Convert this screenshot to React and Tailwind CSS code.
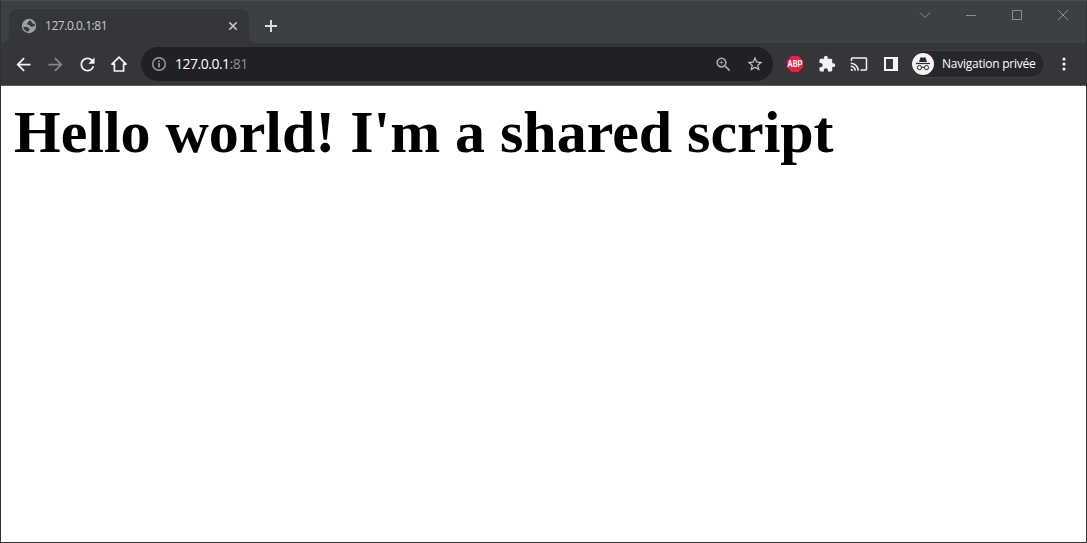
import React from "react";
import { MdArrowBack, MdArrowForward, MdRefresh, MdZoomIn, MdStarBorder, MdExtension, MdCast } from "react-icons/md";

function Slot({ children, className = "" }) {
  return <div className={"flex h-8 w-8 shrink-0 items-center justify-center " + className}>{children}</div>;
}

function GlobeIcon() {
  return (
    <svg width="16" height="16" viewBox="0 0 16 16">
      <circle cx="8" cy="8" r="7.200" fill="#9aa0a6" />
      <path d="M9.500 2.300C7.300 2.500 7.700 4.200 6.500 4.900 5.700 5.400 6 6.600 7.300 6.700c1.800 0 1.300 1.700 2.800 1.900 1.500.2 2.300-.6 3.700-.3.100-1-.1-1.800-.4-2.500-1.300.3-1.800-.1-2.200-1-.3-.8-1.300-.9-1.700-2.500z" fill="#35363a" />
      <path d="M2.300 8.400c1.300.6 2.900.3 4.400.8 1 .4.900 1.500 2 1.700.5.500-.1 1.100-.8 1.300-.5.200-.4.900-.6 1.600-2.700-.4-4.800-2.600-5-5.400z" fill="#35363a" />
    </svg>
  );
}

function HomeIcon() {
  return (
    <svg width="18" height="18" viewBox="0 0 18 18" fill="none" stroke="#f1f3f4" strokeWidth="1.700">
      <path d="M1.500 9.600 9 2.100l7.500 7.500M1.400 9.200H4.400V16h9.200V9.200h3" />
    </svg>
  );
}

function InfoIcon() {
  return (
    <svg width="16" height="16" viewBox="0 0 16 16" fill="none" stroke="#9aa0a6">
      <circle cx="8" cy="8" r="6.300" strokeWidth="1.400" />
      <path d="M8 7v4.500M8 4.500V6" strokeWidth="1.700" />
    </svg>
  );
}

function AbpIcon() {
  return (
    <svg width="18" height="18" viewBox="0 0 18 18">
      <path d="M5.700 1h6.600L17 5.700v6.600L12.300 17H5.700L1 12.300V5.700z" fill="#f21d46" />
      <text x="9" y="12" textAnchor="middle" textLength="15" lengthAdjust="spacingAndGlyphs" fontFamily="Roboto, sans-serif" fontSize="8.500" fontWeight="700" fill="#fff">ABP</text>
    </svg>
  );
}

function IncognitoIcon() {
  return (
    <svg width="22" height="22" viewBox="0 0 22 22">
      <circle cx="11" cy="11" r="11" fill="#f1f3f4" />
      <path d="M7 9 8.400 4.700q.2-.6.800-.4l1.800.5 1.800-.5q.6-.2.800.4L15 9z" fill="#292a2d" />
      <path d="M4 10.500h14" stroke="#292a2d" strokeWidth="1.200" />
      <g fill="none" stroke="#292a2d" strokeWidth="1">
        <circle cx="7.500" cy="14.600" r="2.100" />
        <circle cx="14.500" cy="14.600" r="2.100" />
        <path d="M9.600 14.500q1.400-.7 2.800 0" />
      </g>
    </svg>
  );
}

function TabStrip() {
  return (
    <div className="flex h-[42px] shrink-0 items-stretch justify-between bg-[#3c4043] pl-2">
      <div className="flex">
        <div className="relative mt-2 flex h-[34px] w-60 items-center rounded-t-lg bg-[#35363a] pl-3 pr-[10px]">
          <svg className="absolute -left-2 bottom-0" width="8" height="8" viewBox="0 0 8 8"><path d="M8 0v8H0a8 8 0 0 0 8-8" fill="#35363a" /></svg>
          <svg className="absolute -right-2 bottom-0" width="8" height="8" viewBox="0 0 8 8"><path d="M0 0v8h8a8 8 0 0 1-8-8" fill="#35363a" /></svg>
          <GlobeIcon />
          <span className="ml-2 flex-1 text-[12px] leading-4 tracking-[-0.45px] text-[#c6c9cd]">127.0.0.1:81</span>
          <svg width="12" height="12" viewBox="0 0 12 12" stroke="#c8cacd" strokeWidth="1.600"><path d="m2.300 2.300 7.400 7.400M9.700 2.300 2.300 9.700" /></svg>
        </div>
        <svg className="ml-[14px] mt-[17px]" width="16" height="16" viewBox="0 0 16 16" stroke="#dadce0" strokeWidth="2"><path d="M8 2v12M2 8h12" /></svg>
      </div>
      <div className="flex h-7 items-center">
        <svg width="46" height="28" viewBox="0 0 46 28" fill="none" stroke="#8c8f92"><path d="m18 11.500 5 5 5-5" /></svg>
        <svg width="46" height="28" viewBox="0 0 46 28" stroke="#8c8f92"><path d="M18 14.500h10" /></svg>
        <svg width="46" height="28" viewBox="0 0 46 28" fill="none" stroke="#8c8f92"><path d="M18.500 9.500h9v9h-9z" /></svg>
        <svg width="46" height="28" viewBox="0 0 46 28" stroke="#8c8f92"><path d="m18 9 10 10M28 9 18 19" /></svg>
      </div>
    </div>
  );
}

function Toolbar() {
  return (
    <div className="flex h-[43px] shrink-0 items-center border-b border-[#5f6064] bg-[#35363a] px-[6px]">
      <Slot><MdArrowBack size={21} color="#f1f3f4" /></Slot>
      <Slot><MdArrowForward size={21} color="#85868a" /></Slot>
      <Slot><MdRefresh size={21} color="#f1f3f4" /></Slot>
      <Slot><HomeIcon /></Slot>
      <div className="ml-1.5 flex h-[34px] w-[633px] items-center rounded-full bg-[#202124] pl-[10px]">
        <InfoIcon />
        <span className="ml-2 flex-1 text-[14px] leading-5 tracking-[-0.5px] text-white">127.0.0.1<span className="text-[#8b8f94]">:81</span></span>
        <Slot><MdZoomIn size={19} color="#a8acb0" /></Slot>
        <Slot className="mr-0.5"><MdStarBorder size={18} color="#c4c7ca" /></Slot>
      </div>
      <Slot className="ml-1.5"><AbpIcon /></Slot>
      <Slot><MdExtension size={18} color="#f1f3f4" /></Slot>
      <Slot><MdCast size={18} color="#f1f3f4" /></Slot>
      <Slot><div className="h-[14px] w-[14px] border-2 border-r-[5px] border-[#f1f3f4]" /></Slot>
      <div className="ml-[3px] flex h-[28px] w-[135px] shrink-0 items-center rounded-full border border-[#3f4044] bg-[#27262b] pl-px">
        <IncognitoIcon />
        <span className="ml-2 whitespace-nowrap text-[12px] leading-4 tracking-[-0.24px] text-white">Navigation privée</span>
      </div>
      <Slot className="ml-[3px]">
        <svg width="4" height="16" viewBox="0 0 4 16" fill="#f1f3f4"><circle cx="2" cy="3" r="1.600" /><circle cx="2" cy="8" r="1.600" /><circle cx="2" cy="13" r="1.600" /></svg>
      </Slot>
    </div>
  );
}

export default function App() {
  return (
    <div className="flex h-[543px] w-[1087px] flex-col overflow-hidden border border-[#303134] border-t-[#494c50] bg-white font-['Open_Sans','Noto_Sans',sans-serif]">
      <TabStrip />
      <Toolbar />
      <main className="flex-1 bg-white px-[13px] pt-3">
        <h1 className="whitespace-nowrap font-['Liberation_Serif',serif] text-[60px] font-bold leading-[69px] tracking-[-0.03px] text-black">Hello world! I'm a shared script</h1>
      </main>
    </div>
  );
}
